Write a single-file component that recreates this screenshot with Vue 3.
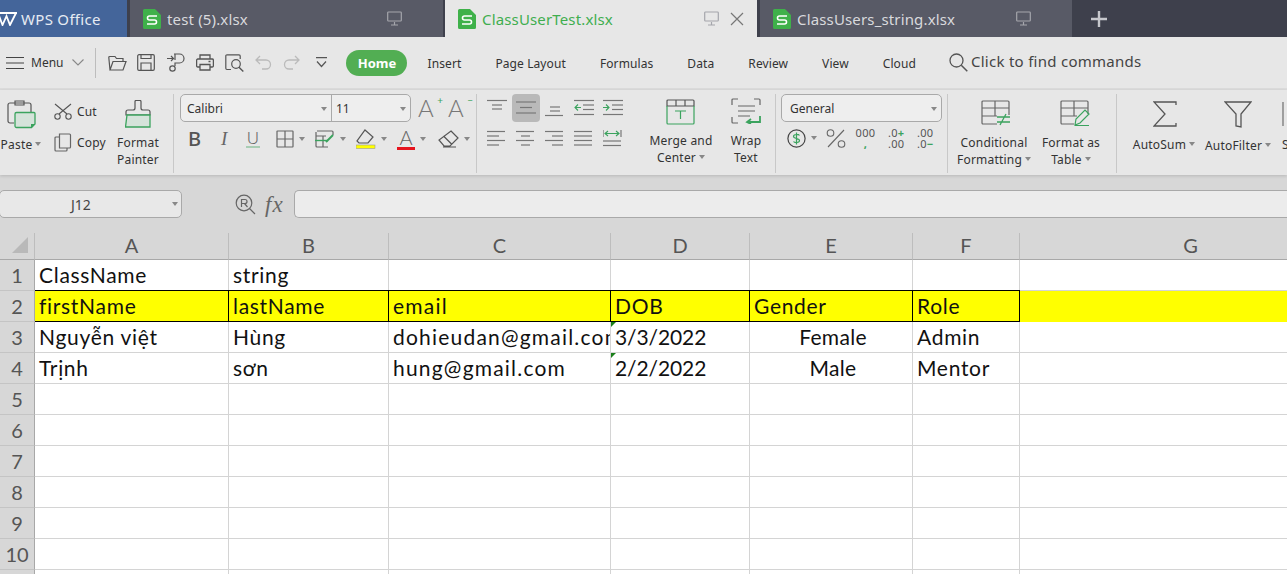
<template>
  <div class="app">
    <!-- tab bar -->
    <div class="tabbar">
      <div class="tab-home">
        <svg class="wps-logo" width="20" height="14" viewBox="0 0 20 14"><path d="M0 1l4.500 12 4-9 3.500 9 6-12M1 1h18" fill="none" stroke="#fff" stroke-width="1.800"/></svg>
        <span>WPS Office</span>
      </div>
      <div v-for="t in tabs" :key="t.name" class="tab" :class="{ active: t.active }">
        <svg class="s-icon" width="18" height="20" viewBox="0 0 18 20"><path d="M1.500 0H12l6 6v12.500a1.500 1.500 0 0 1-1.500 1.500h-15A1.500 1.500 0 0 1 0 18.500v-17A1.500 1.500 0 0 1 1.500 0z" fill="#3fb14a"/><path d="M14 7H6.500a2 2 0 0 0 0 4h5a2 2 0 0 1 0 4H4" fill="none" stroke="#fff" stroke-width="1.600"/></svg>
        <span class="tab-name">{{ t.name }}</span>
        <svg class="mon" width="15" height="15" viewBox="0 0 15 15"><path d="M1.500 1h12a.8.8 0 0 1 .8.800v7.400a.8.8 0 0 1-.8.800h-12a.8.8 0 0 1-.8-.800V1.800a.8.8 0 0 1 .8-.800zM7.500 11v3M4 14h7" fill="none" stroke="#a5a6ac" stroke-width="1.200"/></svg>
        <svg v-if="t.active" class="close" width="14" height="14" viewBox="0 0 14 14"><path d="M1 1l12 12M13 1L1 13" stroke="#777" stroke-width="1.200"/></svg>
      </div>
      <svg class="plus" width="16" height="16" viewBox="0 0 16 16"><path d="M8 0v16M0 8h16" stroke="#c6c7cc" stroke-width="2.400"/></svg>
    </div>

    <!-- menu row -->
    <div class="menubar">
      <svg class="hamb" width="18" height="12" viewBox="0 0 18 12"><path d="M0 .5h18M0 6h18M0 11.500h18" stroke="#444" stroke-width="1.100"/></svg>
      <span class="menu-lbl">Menu</span>
      <svg class="chev" width="12" height="7" viewBox="0 0 12 7"><path d="M.5.500L6 6l5.500-5.500" fill="none" stroke="#888" stroke-width="1.100"/></svg>
      <i class="qdiv"></i>
      <svg class="q q-open" width="19" height="16" viewBox="0 0 19 16"><path d="M2 15L.8 2.500a1 1 0 0 1 1-1H7l1.500 2H15v3M2 15h13l3-8.500H5L2 15z" fill="none" stroke="#555" stroke-width="1.200"/></svg>
      <svg class="q" width="18" height="17" viewBox="0 0 18 17"><path d="M2 .7h14a1.300 1.300 0 0 1 1.300 1.300v13a1.300 1.300 0 0 1-1.300 1.300H2A1.300 1.300 0 0 1 .7 15V2A1.300 1.300 0 0 1 2 .7zM4 16V9h10v7M4 1v3.500h10V1" fill="none" stroke="#555" stroke-width="1.200"/></svg>
      <svg class="q" width="19" height="19" viewBox="0 0 19 19"><path d="M1 5.500h6M5 3l2.500 2.500L5 8M8 1h5.500a4.500 4.500 0 0 1 0 9H9v3M9 1v6" fill="none" stroke="#555" stroke-width="1.200"/><circle cx="6.500" cy="15.500" r="2.700" fill="none" stroke="#555" stroke-width="1.200"/></svg>
      <svg class="q" width="18" height="17" viewBox="0 0 18 17"><path d="M4 5V1h10v4M4 13H1.800A1.200 1.200 0 0 1 .6 11.800V6.200A1.200 1.200 0 0 1 1.800 5h14.400a1.200 1.200 0 0 1 1.200 1.200v5.600a1.200 1.200 0 0 1-1.200 1.200H14M4 10.500h10V16H4zM12.500 7.500h2" fill="none" stroke="#555" stroke-width="1.300"/></svg>
      <svg class="q" width="19" height="18" viewBox="0 0 19 18"><path d="M6 15.500H2A1.200 1.200 0 0 1 .8 14.300V2A1.200 1.200 0 0 1 2 .8h12A1.200 1.200 0 0 1 15.200 2v3" fill="none" stroke="#555" stroke-width="1.200"/><circle cx="11" cy="10" r="4.300" fill="none" stroke="#555" stroke-width="1.200"/><path d="M14 13.200l4.300 4.300" stroke="#555" stroke-width="1.400"/></svg>
      <svg class="q q-undo" width="17" height="15" viewBox="0 0 17 15"><path d="M5 1L1 5l4 4M1 5h10a4.500 4.500 0 0 1 0 9H7" fill="none" stroke="#bbb" stroke-width="1.300"/></svg>
      <svg class="q q-redo" width="17" height="15" viewBox="0 0 17 15"><path d="M12 1l4 4-4 4M16 5H6a4.500 4.500 0 0 0 0 9h4" fill="none" stroke="#bbb" stroke-width="1.300"/></svg>
      <svg class="q q-more" width="11" height="11" viewBox="0 0 11 11"><path d="M0 .7h11M1 4.500l4.500 5 4.500-5" fill="none" stroke="#555" stroke-width="1.200"/></svg>
      <span class="home-pill">Home</span>
      <nav class="nav">
        <span v-for="n in navItems" :key="n">{{ n }}</span>
      </nav>
      <svg class="find-icon" width="19" height="19" viewBox="0 0 19 19"><circle cx="7.500" cy="7.500" r="6.500" fill="none" stroke="#555" stroke-width="1.300"/><path d="M12.300 12.300l6 6" stroke="#555" stroke-width="1.500"/></svg>
      <span class="find">Click to find commands</span>
    </div>

    <!-- ribbon -->
    <div class="ribbon">
      <section class="grp grp-clip">
        <div class="big paste">
          <svg width="29" height="29" viewBox="0 0 29 29"><path d="M7 23H3a2 2 0 0 1-2-2V5a2 2 0 0 1 2-2h19a2 2 0 0 1 2 2v7M8 1h9v4H8z" fill="#e7e7e7" stroke="#555" stroke-width="1.200"/><path d="M8 14a1.500 1.500 0 0 1 1.500-1.500H27a1 1 0 0 1 1 1V24l-3.500 3.500H9.500A1.500 1.500 0 0 1 8 26z" fill="#d5e3da" stroke="#3ba35e" stroke-width="1.300"/><path d="M24 28v-4h4z" fill="#3ba35e"/></svg>
          <span class="lbl paste-lbl">Paste<i class="caret"></i></span>
        </div>
        <div class="cutcopy">
          <div class="mini">
            <svg width="18" height="17" viewBox="0 0 18 17"><path d="M1 1l12 10M17 1L5 11" stroke="#555" stroke-width="1.100"/><circle cx="3.500" cy="13.500" r="2.700" fill="none" stroke="#555" stroke-width="1.100"/><circle cx="14.500" cy="13.500" r="2.700" fill="none" stroke="#555" stroke-width="1.100"/></svg>
            <span>Cut</span>
          </div>
          <div class="mini">
            <svg width="18" height="19" viewBox="0 0 18 19"><path d="M5.500 1h10a1 1 0 0 1 1 1v12a1 1 0 0 1-1 1h-10zM5.500 4H2a1 1 0 0 0-1 1v12a1 1 0 0 0 1 1h10a1 1 0 0 0 1-1v-2" fill="none" stroke="#666" stroke-width="1.200"/></svg>
            <span>Copy</span>
          </div>
        </div>
        <div class="big painter">
          <svg width="27" height="28" viewBox="0 0 27 28"><path d="M10 1.500a1 1 0 0 1 1-1h4a1 1 0 0 1 1 1V8a2 2 0 0 0 2 2h5a2 2 0 0 1 2 2v3H1v-3a2 2 0 0 1 2-2h5a2 2 0 0 0 2-2z" fill="none" stroke="#555" stroke-width="1.200"/><path d="M2 15h23v12H.5z" fill="#d5e3da" stroke="#3ba35e" stroke-width="1.300"/></svg>
          <span class="lbl">Format<br>Painter</span>
        </div>
      </section>

      <section class="grp grp-font">
        <div class="font-top">
          <div class="select font-sel">
            <div class="sel-part sel-name"><span>Calibri</span><i class="caret"></i></div>
            <div class="sel-part sel-size"><span>11</span><i class="caret"></i></div>
          </div>
          <span class="a-grow">A<b>+</b></span>
          <span class="a-grow">A<b>−</b></span>
        </div>
        <div class="font-bot">
          <span class="f-b">B</span>
          <span class="f-i">I</span>
          <span class="f-u">U</span>
          <span class="f-ic"><svg width="18" height="18" viewBox="0 0 18 18"><path d="M1.500 1h15a.5.500 0 0 1 .5.500v15a.5.500 0 0 1-.5.500h-15a.5.500 0 0 1-.5-.500v-15A.5.500 0 0 1 1.500 1zM9 1v16M1 9h16" fill="none" stroke="#666" stroke-width="1.200"/></svg><i class="caret"></i></span>
          <span class="f-ic"><svg width="20" height="18" viewBox="0 0 20 18"><path d="M2 1h15a1 1 0 0 1 1 1v3M1 2v14a1 1 0 0 0 1 1h11M1 6h10M8 6v11" fill="none" stroke="#666" stroke-width="1.200"/><path d="M0 10.500h13" stroke="#3ba35e" stroke-width="1.400"/><path d="M11 12l7-7" stroke="#3ba35e" stroke-width="2"/></svg><i class="caret"></i></span>
          <span class="f-ic"><svg width="20" height="20" viewBox="0 0 20 20"><path d="M9 1l8 7-5 6H3L1 12z" fill="none" stroke="#555" stroke-width="1.200"/><rect x="0" y="16" width="19" height="3.500" fill="#ffff00" stroke="#999" stroke-width=".6"/></svg><i class="caret"></i></span>
          <span class="f-ic"><span class="a-color">A</span><i class="caret"></i></span>
          <span class="f-ic f-erase"><svg width="21" height="18" viewBox="0 0 21 18"><path d="M13 1l7 7-8 8H6L1 10zM5.500 6l8 8M5 17h13" fill="none" stroke="#555" stroke-width="1.200"/></svg><i class="caret"></i></span>
        </div>
      </section>

      <section class="grp grp-align">
        <div class="align-grid">
          <span v-for="(a, i) in alignIcons" :key="i" class="al" :class="{ on: i === 1 }">
            <svg width="20" height="18" viewBox="0 0 20 18">
              <path v-for="(l, j) in a.lines" :key="j" :d="l" stroke="#777" stroke-width="1.200" fill="none"/>
              <path v-if="a.green" :d="a.green" stroke="#3ba35e" stroke-width="1.100" fill="none"/>
            </svg>
          </span>
        </div>
        <div class="big merge">
          <svg width="29" height="26" viewBox="0 0 29 26"><path d="M1 7V2a1 1 0 0 1 1-1h25a1 1 0 0 1 1 1v5H1zM10 1v6M19 1v6" fill="none" stroke="#555" stroke-width="1.200"/><path d="M1 7v17a1 1 0 0 0 1 1h25a1 1 0 0 0 1-1V7M9 12h11M14.500 12v8" fill="none" stroke="#3ba35e" stroke-width="1.200"/></svg>
          <span class="lbl">Merge and<br>Center<i class="caret"></i></span>
        </div>
        <div class="big wrap">
          <svg width="31" height="26" viewBox="0 0 31 26"><path d="M1 7V2a1 1 0 0 1 1-1h5M23 1h5a1 1 0 0 1 1 1v5M1 19v5a1 1 0 0 0 1 1h5M7 8h17M7 13h17M7 18h12" fill="none" stroke="#666" stroke-width="1.200"/><path d="M29 18v6H16M20 21l-4 3 4 2" fill="none" stroke="#3ba35e" stroke-width="1.800"/></svg>
          <span class="lbl">Wrap<br>Text</span>
        </div>
      </section>

      <section class="grp grp-num">
        <div class="select num-sel"><span>General</span><i class="caret"></i></div>
        <div class="num-bot">
          <span class="f-ic dollar"><svg width="19" height="19" viewBox="0 0 19 19"><circle cx="9.500" cy="9.500" r="8.600" fill="none" stroke="#444" stroke-width="1.200"/><path d="M12.500 6.500c-1-1.500-6-1.500-6 1s6 1.500 6 4-5 2.500-6 1M9.500 3.500v12" fill="none" stroke="#3ba35e" stroke-width="1.200"/></svg><i class="caret"></i></span>
          <span class="pct"><svg width="20" height="19" viewBox="0 0 20 19"><circle cx="4.500" cy="4" r="3.300" fill="none" stroke="#666" stroke-width="1.100"/><circle cx="15.500" cy="15" r="3.300" fill="none" stroke="#666" stroke-width="1.100"/><path d="M18 1L2 18" stroke="#666" stroke-width="1.100"/></svg></span>
          <span class="stack s-000"><span>000</span><em>,</em></span>
          <span class="stack s-inc"><span>.0<em>+</em></span><span>.00</span></span>
          <span class="stack s-dec"><span>.00</span><span>.0<em>−</em></span></span>
        </div>
      </section>

      <section class="grp grp-styles">
        <div class="big cond">
          <svg width="30" height="26" viewBox="0 0 30 26"><path d="M16 24H2a1 1 0 0 1-1-1V2a1 1 0 0 1 1-1h25a1 1 0 0 1 1 1v13M1 8h27M1 16h15M14 1v15" fill="none" stroke="#666" stroke-width="1.200"/><path d="M16 17h13M16 22h13M25 14l-6 11" stroke="#3ba35e" stroke-width="1.300"/></svg>
          <span class="lbl">Conditional<br>Formatting<i class="caret"></i></span>
        </div>
        <div class="big astable">
          <svg width="30" height="26" viewBox="0 0 30 26"><path d="M14 24H2a1 1 0 0 1-1-1V2a1 1 0 0 1 1-1h25a1 1 0 0 1 1 1v12M1 8h27M1 16h16M14 1v15" fill="none" stroke="#666" stroke-width="1.200"/><path d="M15 25l1-6 9-9 4 4-9 9zM15 25.500h14" fill="none" stroke="#3ba35e" stroke-width="1.200"/></svg>
          <span class="lbl">Format as<br>Table<i class="caret"></i></span>
        </div>
      </section>

      <section class="grp grp-edit">
        <div class="big sum">
          <svg width="24" height="26" viewBox="0 0 24 26"><path d="M23 4V1H1l11 12L1 25h22v-3" fill="none" stroke="#555" stroke-width="1.300"/></svg>
          <span class="lbl one">AutoSum<i class="caret"></i></span>
        </div>
        <div class="big filt">
          <svg width="28" height="27" viewBox="0 0 28 27"><path d="M1 1h26L17 13v13l-5-1V13z" fill="none" stroke="#555" stroke-width="1.300"/></svg>
          <span class="lbl one">AutoFilter<i class="caret"></i></span>
        </div>
        <div class="big sort">
          <svg width="20" height="26" viewBox="0 0 20 26"><path d="M1 1v24" stroke="#777" stroke-width="1.300"/></svg>
          <span class="lbl one">Sort</span>
        </div>
      </section>
    </div>

    <!-- formula row -->
    <div class="formula">
      <div class="namebox"><span>J12</span><i class="caret"></i></div>
      <svg class="fx-zoom" width="21" height="21" viewBox="0 0 21 21"><circle cx="9" cy="9" r="7.800" fill="none" stroke="#666" stroke-width="1.200"/><path d="M6.500 13V5.500H10a2 2 0 0 1 0 4H6.500M9.500 9.500l3 3.500M14.500 14.500l5.500 5.500" fill="none" stroke="#666" stroke-width="1.200"/></svg>
      <span class="fx">fx</span>
      <div class="fx-input"></div>
    </div>

    <!-- sheet -->
    <div class="sheet">
      <div class="corner"><i></i></div>
      <div v-for="c in columns" :key="c" class="colhead">{{ c }}</div>
      <template v-for="r in 11" :key="r">
        <div class="rowhead">{{ r < 11 ? r : '' }}</div>
        <div
          v-for="(c, i) in columns"
          :key="c"
          class="cell"
          :class="cellClass(r, i)"
        >{{ cellText(r, i) }}</div>
      </template>
    </div>
  </div>
</template>

<script setup>
const tabs = [
  { name: 'test (5).xlsx' },
  { name: 'ClassUserTest.xlsx', active: true },
  { name: 'ClassUsers_string.xlsx' },
]

const navItems = ['Insert', 'Page Layout', 'Formulas', 'Data', 'Review', 'View', 'Cloud']

const alignIcons = [
  { lines: ['M0 1.500h20', 'M5 6h10', 'M5 10h10'] },
  { lines: ['M0 3h20', 'M4 8.500h12', 'M0 14h20'] },
  { lines: ['M5 8h10', 'M5 12h10', 'M0 16.500h18'] },
  { lines: ['M0 1.500h20', 'M9 6h11', 'M9 10.500h11', 'M0 15.500h20'], green: 'M1 8.500h6M4 5.500L1 8.500l3 3' },
  { lines: ['M0 1.500h20', 'M9 6h11', 'M9 10.500h11', 'M0 15.500h20'], green: 'M0 8.500h6M3 5.500l3 3-3 3' },
  { lines: ['M0 1.500h18', 'M0 6h12', 'M0 10.500h18', 'M0 15h12'] },
  { lines: ['M0 1.500h18', 'M5 6h9', 'M0 10.500h18', 'M5 15h9'] },
  { lines: ['M0 1.500h18', 'M7 6h11', 'M0 10.500h18', 'M7 15h11'] },
  { lines: ['M0 1.500h18', 'M0 6h18', 'M0 10.500h18', 'M0 15h18'] },
  { lines: ['M0 0v7', 'M18 0v7', 'M0 11h18', 'M0 15.500h18'], green: 'M2 3.500h14M5 1L2 3.500 5 6M13 1l3 2.500L13 6' },
]

const columns = ['A', 'B', 'C', 'D', 'E', 'F', 'G']

const rows = {
  1: ['ClassName', 'string'],
  2: ['firstName', 'lastName', 'email', 'DOB', 'Gender', 'Role'],
  3: ['Nguyễn việt', 'Hùng', 'dohieudan@gmail.com', '3/3/2022', 'Female', 'Admin'],
  4: ['Trịnh', 'sơn', 'hung@gmail.com', '2/2/2022', 'Male', 'Mentor'],
}

function cellText(r, i) {
  return rows[r]?.[i] ?? ''
}

function cellClass(r, i) {
  return {
    yellow: r === 2,
    boxed: r === 2 && i < 6,
    center: i === 4 && (r === 3 || r === 4),
    flag: i === 3 && (r === 3 || r === 4),
    mail: i === 2,
  }
}
</script>

<style>
html, body { margin: 0; overflow: hidden; background: #fff; }
</style>

<style scoped>
.app {
  width: 1287px;
  height: 574px;
  overflow: hidden;
  font-family: "Noto Sans", "Open Sans", sans-serif;
  color: #333;
}

/* ─── tabs ─────────────────────── */
.tabbar {
  display: flex;
  height: 37px;
  background: #3e404c;
  align-items: stretch;
}
.tab-home {
  width: 127px;
  margin-right: 3px;
  background: #44659a;
  color: #e6ebf3;
  display: flex;
  align-items: center;
  font-size: 15px;
  letter-spacing: .3px;
  flex-shrink: 0;
}
.wps-logo { margin: 0 3px 0 -2px; }
.tab {
  width: 312px;
  margin-right: 3px;
  flex-shrink: 0;
  background: #585a66;
  color: #d8d9dd;
  display: flex;
  align-items: center;
  padding-left: 13px;
  box-sizing: border-box;
  font-size: 15px;
  letter-spacing: .15px;
}
.tab:nth-child(2) { width: 313px; margin-right: 2px; }
.tab.active {
  background: #e7e7e7;
  color: #3fae4f;
}
.tab-name { margin-left: 6px; flex: 1; }
.mon { margin-right: 41px; }
.active .mon { margin-right: 11px; }
.close { margin-right: 13px; }
.plus { margin-left: 16px; align-self: center; }

/* ─── menu row ─────────────────── */
.menubar {
  height: 51px;
  background: #e7e7e7;
  border-bottom: 2px solid #dcdcdc;
  display: flex;
  align-items: center;
  font-size: 12px;
}
.hamb { margin-left: 6px; }
.menu-lbl { margin-left: 7px; color: #333; }
.chev { margin-left: 9px; }
.qdiv { width: 1px; height: 30px; background: #bdbdbd; margin: 0 12px 0 11px; }
.q { margin-right: 11px; flex-shrink: 0; }
.q-open { margin-right: 10px; }
.q-undo { margin-left: 0; }
.q-more { margin-left: 5px; margin-right: 19px; }
.home-pill {
  width: 61px;
  height: 26px;
  border-radius: 13px;
  background: #52ae53;
  color: #fff;
  font-weight: 700;
  font-size: 13px;
  line-height: 26px;
  text-align: center;
}
.nav { display: flex; gap: 34px; margin-left: 20px; color: #333; letter-spacing: .1px; padding-top: 2px; }
.find-icon { margin-left: 33px; }
.find { font-size: 15px; margin-left: 3px; color: #444; letter-spacing: .27px; margin-bottom: 3px; }

/* ─── ribbon ───────────────────── */
.ribbon {
  height: 85px;
  background: #e7e7e7;
  display: flex;
  font-size: 12px;
  box-shadow: 0 1px 3px rgba(0, 0, 0, 0.15);
  position: relative;
  overflow: hidden;
}
.grp {
  height: 79px;
  margin-top: 4px;
  border-right: 1px solid #c8c8c8;
  display: flex;
  flex-shrink: 0;
  box-sizing: content-box;
}
.caret {
  display: inline-block;
  width: 0;
  height: 0;
  border: 3px solid transparent;
  border-top: 4px solid #888;
  border-bottom: 0;
  margin-left: 3px;
  vertical-align: 3px;
}
.big {
  display: flex;
  flex-direction: column;
  align-items: center;
  flex-shrink: 0;
}
.lbl {
  text-align: center;
  line-height: 17px;
  white-space: nowrap;
  letter-spacing: .2px;
}
.grp-clip { width: 173px; }
.paste { width: 46px; padding-top: 6px; }
.paste svg { margin-left: -3px; }
.paste-lbl { margin-top: 7px; margin-left: -4px; }
.cutcopy { margin-left: 8px; width: 60px; padding-top: 8px; display: flex; flex-direction: column; gap: 12px; }
.mini { display: flex; align-items: center; gap: 5px; height: 19px; letter-spacing: .15px; }
.painter { width: 52px; margin-left: -2px; padding-top: 6px; }
.painter .lbl { margin-top: 6px; }

.grp-font { width: 296px; margin-left: 6px; box-sizing: content-box; flex-direction: column; }
.font-top { display: flex; align-items: center; height: 28px; }
.select {
  border: 1px solid #a9a9a9;
  border-radius: 5px;
  background: #eeeeee;
  box-sizing: border-box;
  height: 28px;
  display: flex;
  align-items: center;
  padding-top: 1px;
}
.font-sel { width: 231px; padding-top: 0; }
.sel-part { height: 100%; display: flex; align-items: center; justify-content: space-between; padding: 1px 4px 0 6px; box-sizing: border-box; }
.sel-name { width: 151px; border-right: 1px solid #a9a9a9; }
.sel-size { flex: 1; padding-left: 4px; }
.a-grow { width: 20px; margin-left: 7px; font-size: 24px; line-height: 28px; color: #777; position: relative; font-family: "Lato", sans-serif; font-weight: 300; }
.a-grow + .a-grow { margin-left: 10px; }
.a-grow b { font-size: 10px; font-weight: 400; line-height: 10px; position: absolute; top: 1px; right: -5px; color: #3ba35e; }
.font-bot { display: flex; align-items: center; height: 23px; margin-top: 5px; }
.f-b { font-size: 20px; font-weight: 500; color: #555; width: 13px; margin-left: 8px; line-height: 1; }
.f-i { font-family: "Liberation Serif", serif; font-style: italic; font-size: 19px; color: #666; width: 8px; margin-left: 20px; line-height: 1; }
.f-u { font-size: 17px; color: #666; margin-left: 17px; width: 14px; line-height: 1; border-bottom: 2px solid #a8cdb4; font-weight: 300; text-align: center; }
.f-ic { display: inline-flex; align-items: center; margin-left: 10px; }
.f-u + .f-ic { margin-left: 16px; }
.f-erase { margin-left: 12px; }
.f-ic .caret { margin-left: 5px; vertical-align: 0; }
.a-color { font-size: 20px; line-height: 19px; width: 18px; text-align: center; color: #666; border-bottom: 3px solid #e6141e; font-family: "Lato", sans-serif; font-weight: 300; }

.grp-align { width: 298px; margin-left: 0; }
.align-grid {
  display: grid;
  grid-template-columns: repeat(5, 28px);
  grid-auto-rows: 28px;
  column-gap: 1px;
  row-gap: 3px;
  margin-left: 6px;
  width: 148px;
  flex-shrink: 0;
}
.al { display: flex; align-items: center; justify-content: center; border-radius: 4px; }
.al.on { background: #b9b9b9; }
.merge { width: 70px; margin-left: 15px; padding-top: 5px; }
.merge svg { margin-left: -2px; }
.merge .lbl { margin-top: 7px; }
.wrap { width: 42px; margin-left: 9px; padding-top: 4px; }
.wrap .lbl { margin-top: 8px; }

.grp-num { width: 166px; margin-left: 5px; flex-direction: column; }
.num-sel { width: 161px; padding: 1px 4px 0 8px; justify-content: space-between; }
.num-bot { display: flex; align-items: center; height: 24px; margin-top: 4px; }
.dollar { margin-left: 6px; }
.pct { margin-left: 9px; display: flex; }
.stack {
  font-size: 11px;
  line-height: 11px;
  color: #555;
  display: flex;
  flex-direction: column;
  letter-spacing: .3px;
}
.stack em { font-style: normal; color: #3ba35e; font-weight: 700; }
.s-000 { margin-left: 11px; width: 17px; align-items: center; }
.s-inc { margin-left: 14px; width: 20px; }
.s-dec { margin-left: 9px; width: 20px; }

.grp-styles { width: 168px; }
.cond { width: 72px; margin-left: 10px; padding-top: 6px; }
.cond svg { margin-left: 4px; }
.astable { width: 66px; margin-left: 8px; padding-top: 6px; }
.astable svg { margin-left: 8px; }
.cond .lbl, .astable .lbl { margin-top: 8px; }

.grp-edit { border-right: 0; }
.sum { width: 62px; margin-left: 16px; padding-top: 7px; }
.sum svg { margin-left: 2px; }
.filt { width: 66px; margin-left: 10px; padding-top: 7px; }
.sort { width: 30px; margin-left: 11px; padding-top: 7px; align-items: flex-start; }
.sum .lbl, .filt .lbl, .sort .lbl { margin-top: 9px; }

/* ─── formula row ──────────────── */
.formula {
  height: 58px;
  background: #d7d7d7;
  display: flex;
  align-items: center;
  box-sizing: border-box;
}
.namebox, .fx-input {
  height: 28px;
  border: 1px solid #a9a9a9;
  border-radius: 5px;
  background: #e8e8e8;
  box-sizing: border-box;
}
.namebox {
  width: 183px;
  margin-left: -1px;
  display: flex;
  align-items: center;
  justify-content: space-between;
  padding: 0 3px 0 71px;
  font-size: 14px;
  color: #444;
}
.fx-zoom { margin-left: 53px; }
.fx { font-family: "Liberation Serif", serif; font-style: italic; font-size: 23px; color: #666; margin-left: 9px; width: 20px; line-height: 1; letter-spacing: 1px; }
.fx-input { flex: 1; margin-left: 9px; background: #ececec; border-right: 0; border-radius: 5px 0 0 5px; }

/* ─── sheet ────────────────────── */
.sheet {
  display: grid;
  grid-template-columns: 35px 194px 160px 222px 139px 163px 107px 342px;
  grid-template-rows: 27px;
  grid-auto-rows: 31px;
  background: #fff;
}
.corner, .colhead, .rowhead {
  background: #d7d7d7;
  color: #555;
  font-family: "Lato", sans-serif;
  font-size: 20px;
  box-sizing: border-box;
  display: flex;
  align-items: center;
  justify-content: center;
}
.colhead { border-right: 1px solid #bdbdbd; border-bottom: 1px solid #a8a8a8; padding-bottom: 3px; }
.corner { border-right: 1px solid #bdbdbd; border-bottom: 1px solid #a8a8a8; justify-content: flex-end; align-items: flex-end; padding: 0 6px 6px 0; }
.corner i {
  width: 0;
  height: 0;
  border-left: 16px solid transparent;
  border-bottom: 16px solid #b9b9b9;
}
.rowhead { border-right: 1px solid #a8a8a8; border-bottom: 1px solid #c4c4c4; }
.cell {
  box-sizing: border-box;
  border-right: 1px solid #d4d4d4;
  border-bottom: 1px solid #d4d4d4;
  font-family: "Lato", sans-serif;
  font-size: 21px;
  letter-spacing: .7px;
  line-height: 30px;
  color: #111;
  padding: 0 0 0 4px;
  overflow: hidden;
  white-space: nowrap;
  position: relative;
}
.mail { letter-spacing: 1.2px; }
.yellow { background: #ffff00; border-color: #ffff00; }
.boxed { border: 1px solid #000; border-left: 0; margin-top: -1px; height: 32px; }
.center { text-align: center; letter-spacing: .3px; }
.flag { letter-spacing: -.1px; }
.flag::before {
  content: '';
  position: absolute;
  left: 0;
  top: 0;
  border-top: 5px solid #1a7f1a;
  border-right: 5px solid transparent;
}
</style>
